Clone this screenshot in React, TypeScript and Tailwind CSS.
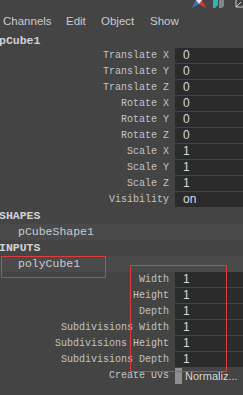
import React from "react";

const MONO = "font-['Liberation_Mono','DejaVu_Sans_Mono',monospace]";
const SANS = "font-['Liberation_Sans',Arial,sans-serif]";

const transformRows = [
  ["Translate X", "0"],
  ["Translate Y", "0"],
  ["Translate Z", "0"],
  ["Rotate X", "0"],
  ["Rotate Y", "0"],
  ["Rotate Z", "0"],
  ["Scale X", "1"],
  ["Scale Y", "1"],
  ["Scale Z", "1"],
  ["Visibility", "on"],
];

const inputRows = [
  ["Width", "1"],
  ["Height", "1"],
  ["Depth", "1"],
  ["Subdivisions Width", "1"],
  ["Subdivisions Height", "1"],
  ["Subdivisions Depth", "1"],
];

function AttrRow({ label, value }: { label: string; value: string }) {
  return (
    <div className="flex h-[16px] items-start">
      <div className={`w-[169px] shrink-0 text-right text-[10px] leading-[15px] text-[#c0c4c8] ${MONO}`}>
        {label}
      </div>
      <div className="ml-[6px] flex h-[15px] flex-1 items-center bg-[#2b2b2b] pl-[8px]">
        <span className={`text-[12px] leading-[15px] text-[#d6dbe0] ${SANS}`}>{value}</span>
      </div>
    </div>
  );
}

function NodeRow({ name }: { name: string }) {
  return (
    <div className="flex h-[16px] items-center bg-[#4a4a4a] pl-[18px]">
      <span className={`text-[11.5px] leading-[16px] text-[#c8ccd0] ${MONO}`}>{name}</span>
    </div>
  );
}

function Header({ text }: { text: string }) {
  return (
    <div className="flex h-[16px] items-center">
      <span className={`-ml-[1px] text-[11.5px] font-bold leading-[16px] text-[#d2d2d2] ${MONO}`}>{text}</span>
    </div>
  );
}

export default function App() {
  return (
    <div className="relative h-[395px] w-[243px] overflow-hidden bg-[#444444]">
      {/* toolbar icons, cut off at the top */}
      <svg className="absolute left-[192px] top-0" width="14" height="8" viewBox="0 0 14 8">
        <path d="M0 8 L4 0 L7 4 Z" fill="#3d6fd6" />
        <path d="M14 8 L10 0 L7 4 Z" fill="#d63c3c" />
        <path d="M4 0 L10 0 L7 4 Z" fill="#e8e8e8" />
      </svg>
      <svg className="absolute left-[213px] top-0" width="12" height="8" viewBox="0 0 12 8">
        <path d="M0 0 H5 V5 L2 8 H0 Z" fill="#2fb3b8" />
        <path d="M6 0 H11 V6 L9 8 H6 Z" fill="#7c8a90" />
      </svg>
      <svg className="absolute left-[235px] top-0" width="8" height="8" viewBox="0 0 8 8">
        <path d="M1 0 V7 H8" stroke="#d0d0d0" strokeWidth="1" fill="none" />
        <path d="M1 7 L6 2" stroke="#d0d0d0" strokeWidth="1" />
      </svg>

      {/* menu bar */}
      <div className={`flex h-[34px] items-start pl-[3px] pt-[13px] text-[11.5px] leading-[16px] text-[#cacaca] ${SANS}`}>
        <span className="w-[63px]">Channels</span>
        <span className="w-[35px]">Edit</span>
        <span className="w-[49px]">Object</span>
        <span>Show</span>
      </div>

      <div className="flex h-[14px] items-center">
        <span className={`-ml-[1px] text-[11.5px] font-bold leading-[14px] text-[#d2d2d2] ${MONO}`}>pCube1</span>
      </div>

      {transformRows.map(([l, v]) => (
        <AttrRow key={l} label={l} value={v} />
      ))}

      <Header text="SHAPES" />
      <NodeRow name="pCubeShape1" />
      <Header text="INPUTS" />
      <NodeRow name="polyCube1" />

      {inputRows.map(([l, v]) => (
        <AttrRow key={l} label={l} value={v} />
      ))}

      <div className="flex h-[16px] items-start">
        <div className={`w-[169px] shrink-0 text-right text-[10px] leading-[15px] text-[#c0c4c8] ${MONO}`}>
          Create UVs
        </div>
        <div className="ml-[6px] flex h-[16px] flex-1 items-center">
          <div className="h-[16px] w-[7px] bg-[#8e8e8e]" />
          <span className={`ml-[3px] text-[11px] leading-[16px] text-[#d6d6d6] ${SANS}`}>Normaliz...</span>
        </div>
      </div>

      {/* red annotation boxes */}
      <div className="pointer-events-none absolute left-[1px] top-[256px] h-[22px] w-[105px] border border-[#e23b3b]" />
      <div className="pointer-events-none absolute left-[130px] top-[265px] h-[107px] w-[97px] border border-[#e23b3b]" />
    </div>
  );
}
